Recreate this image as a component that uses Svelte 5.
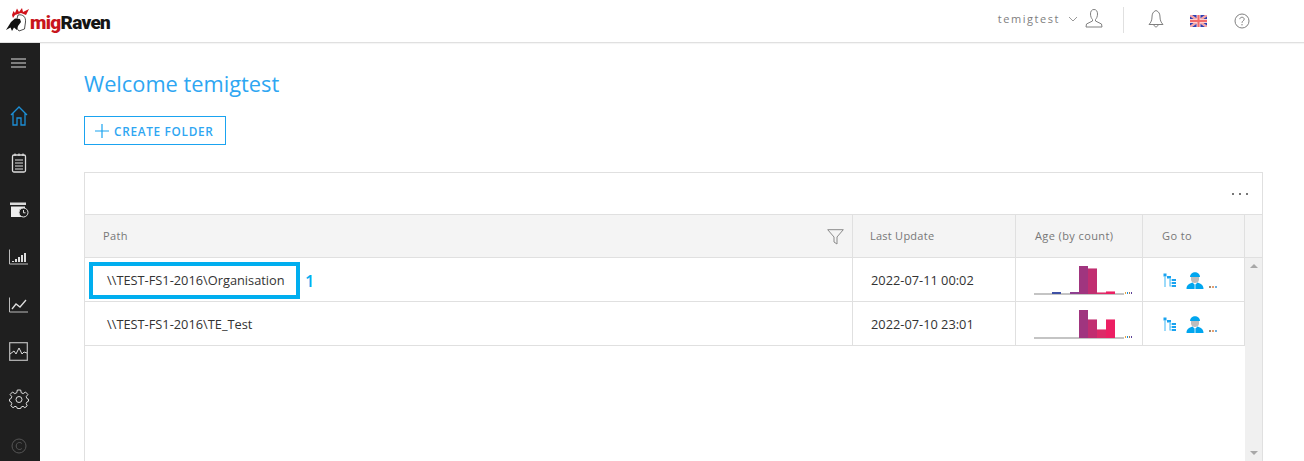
<script>
	// Sidebar entries, in order, are drawn in the markup below
	const rows = [
		{
			path: '\\\\TEST-FS1-2016\\Organisation',
			updated: '2022-07-11 00:02',
			age: [0, 0, 2, 0, 2, 28, 26, 2, 3]
		},
		{
			path: '\\\\TEST-FS1-2016\\TE_Test',
			updated: '2022-07-10 23:01',
			age: [0, 0, 0, 0, 0, 28, 19, 9, 19]
		}
	];

	const barColors = ['#5b3f96', '#5b3f96', '#3f51a5', '#6a3f96', '#8e3f8f', '#a0357f', '#c12e70', '#dc2b68', '#ec1f63'];
	const dotColors = ['#e8a33d', '#1f8fd6', '#a9794a', '#5b3f96'];
</script>

<div class="app">
	<header class="topbar">
		<div class="logo">
			<svg width="30" height="30" viewBox="0 0 30 30">
				<path d="M12 9 L13.5 5 L15 7 L17 2.5 L19 6 L22 2 L23 6 L29 3 L26 9 L21 7 L15 9 L13 12 Z" fill="#d0121b" />
				<path d="M18 9 C23 8 26 11 25.5 16 L24.5 23 L19 25 L15 20 Z" fill="#fff" stroke="#222" stroke-width="0.8" />
				<path d="M6 24 L11 16 L15 12.5 L20 13 L21 16 L18 20 L17 24 L14 21.5 L12 25 L10.5 21.5 Z" fill="#111" />
			</svg>
			<span class="logo-text"><span class="mig">mig</span>Raven</span>
		</div>
		<div class="top-actions">
			<span class="username">temigtest</span>
			<svg class="chevron" width="10" height="6" viewBox="0 0 10 6"><path d="M1 1 L5 5 L9 1" fill="none" stroke="#999" /></svg>
			<svg class="user" width="18" height="20" viewBox="0 0 18 20">
				<path d="M9 1.5 C6.5 1.5 5.5 3.5 5.5 6 C5.5 8.5 6.5 10.5 7.5 11.5 L7.5 13 L1.5 16 L1 19 L17 19 L16.5 16 L10.5 13 L10.5 11.5 C11.5 10.5 12.5 8.5 12.5 6 C12.5 3.5 11.5 1.5 9 1.5 Z" fill="none" stroke="#808080" />
			</svg>
			<span class="divider"></span>
			<svg class="bell" width="16" height="20" viewBox="0 0 16 20">
				<path d="M8 1.5 C5 2.5 4 5 4 8 C4 11 3 13.5 1 15.5 L15 15.5 C13 13.5 12 11 12 8 C12 5 11 2.5 8 1.5 Z M6 16 C6.5 18.5 9.5 18.5 10 16" fill="none" stroke="#808080" />
			</svg>
			<svg class="flag" width="17" height="12" viewBox="0 0 17 12">
				<rect width="17" height="12" fill="#2b3fb5" />
				<path d="M0 0 L17 12 M17 0 L0 12" stroke="#f7a6a6" stroke-width="2.4" />
				<path d="M8.5 0 V12 M0 6 H17" stroke="#fbd0d0" stroke-width="4" />
				<path d="M8.5 0 V12 M0 6 H17" stroke="#f26a6a" stroke-width="2" />
			</svg>
			<svg class="help" width="16" height="16" viewBox="0 0 16 16">
				<circle cx="8" cy="8" r="7" fill="none" stroke="#808080" />
				<path d="M5.8 6.2 C5.8 3.6 10.2 3.6 10.2 6.2 C10.2 7.8 8 7.8 8 9.8" fill="none" stroke="#808080" />
				<circle cx="8" cy="11.8" r="0.7" fill="#808080" />
			</svg>
		</div>
	</header>

	<div class="body">
		<nav class="sidebar">
			<div class="nav-item menu">
				<svg width="15" height="10" viewBox="0 0 15 10"><path d="M0 1 H15 M0 5 H15 M0 9 H15" stroke="#ddd" stroke-width="1.2" /></svg>
			</div>
			<div class="nav-item home">
				<svg width="18" height="20" viewBox="0 0 18 20"><path d="M1 9 L9 1 L17 9 M3 7.5 V19 H7 V12 H11 V19 H15 V7.5" fill="none" stroke="#1c8fd6" stroke-width="1.3" /></svg>
			</div>
			<div class="nav-item">
				<svg width="16" height="20" viewBox="0 0 16 20"><rect x="1.5" y="2" width="13" height="17" rx="1.5" fill="none" stroke="#ddd" stroke-width="1.3" /><path d="M4 7 H12 M4 10 H12 M4 13 H12 M4 16 H12 M4 0.5 V3 M8 0.5 V3 M12 0.5 V3" stroke="#ddd" stroke-width="1.2" /></svg>
			</div>
			<div class="nav-item">
				<svg width="20" height="16" viewBox="0 0 20 16"><rect x="1" y="0.5" width="16" height="2.5" fill="#ddd" /><rect x="2" y="4.5" width="14" height="10.5" fill="#eee" /><circle cx="14.5" cy="10.5" r="4.5" fill="#1f1f1f" stroke="#ddd" /><path d="M14.5 8 V10.8 H16.5" fill="none" stroke="#ddd" /></svg>
			</div>
			<div class="nav-item">
				<svg width="19" height="16" viewBox="0 0 19 16"><path d="M0.5 0.5 V15 H19" fill="none" stroke="#bbb" /><path d="M4 13 V12 M7 13 V10 M10 13 V8 M13 13 V6 M16 13 V4" stroke="#ddd" stroke-width="2" /></svg>
			</div>
			<div class="nav-item">
				<svg width="19" height="16" viewBox="0 0 19 16"><path d="M0.5 0.5 V15 H19" fill="none" stroke="#bbb" /><path d="M3 12 L7 7 L11 10 L17 3" fill="none" stroke="#ddd" stroke-width="1.3" /></svg>
			</div>
			<div class="nav-item">
				<svg width="19" height="19" viewBox="0 0 19 19"><rect x="0.7" y="0.7" width="17.6" height="17.6" fill="none" stroke="#bbb" stroke-width="1.2" /><path d="M1 12 L5 9 L7 12 L10 6 L13 12 L15 10 L18 11" fill="none" stroke="#ddd" /></svg>
			</div>
			<div class="nav-item">
				<svg width="20" height="20" viewBox="0 0 20 20"><path d="M8.3 1 H11.7 L12.2 3.7 L14.2 4.6 L16.5 3 L18.9 5.5 L17.2 7.7 L18.1 9.7 L19.5 10.2 V12.2 L17.9 13 L17.2 14.6 L18.2 16.8 L15.9 18.7 L14 17.3 L12.2 18 L11.7 19.5 H8.3 L7.8 18 L6 17.3 L4.1 18.7 L1.8 16.8 L2.8 14.6 L2.1 13 L0.5 12.2 V10.2 L1.9 9.7 L2.8 7.7 L1.1 5.5 L3.5 3 L5.8 4.6 L7.8 3.7 Z" fill="none" stroke="#ddd" /><circle cx="10" cy="10.5" r="3" fill="none" stroke="#ddd" /></svg>
			</div>
			<div class="nav-item">
				<svg width="16" height="16" viewBox="0 0 16 16"><circle cx="8" cy="8" r="7" fill="none" stroke="#555" /><path d="M10.8 5.5 C9 3.5 5.2 4.5 5.2 8 C5.2 11.5 9 12.5 10.8 10.5" fill="none" stroke="#555" /></svg>
			</div>
		</nav>

		<main class="content">
			<h1>Welcome temigtest</h1>
			<button class="create">
				<svg width="14" height="14" viewBox="0 0 14 14"><path d="M7 0 V14 M0 7 H14" stroke="#1aa3f0" stroke-width="1.2" /></svg>
				CREATE FOLDER
			</button>

			<section class="card">
				<div class="toolbar"><span class="more"><i></i><i></i><i></i></span></div>
				<div class="row head">
					<div class="cell path">
						Path
						<svg class="filter" width="17" height="16" viewBox="0 0 17 16"><path d="M0.7 0.7 H16.3 L10 8 V15 L7 13 V8 Z" fill="none" stroke="#8a8a8a" /></svg>
					</div>
					<div class="cell">Last Update</div>
					<div class="cell">Age (by count)</div>
					<div class="cell">Go to</div>
					<div class="cell gutter"></div>
				</div>
				<div class="table-body">
					<div class="rows">
						{#each rows as row, i}
							<div class="row item">
								<div class="cell path">
									{row.path}
									{#if i === 0}
										<span class="mark"></span>
										<span class="mark-no">1</span>
									{/if}
								</div>
								<div class="cell">{row.updated}</div>
								<div class="cell chart">
									<svg width="100" height="30" viewBox="0 0 100 30">
										<rect x="0" y="28.5" width="90" height="1" fill="#8a8a8a" />
										{#each row.age as h, b}
											{#if h > 0}
												<rect x={b * 9} y={29 - h} width="9" height={h} fill={barColors[b]} />
												{#if b > 5}<rect x={b * 9} y={29 - h} width="9" height="1" fill="#fff" opacity="0.45" />{/if}
											{/if}
										{/each}
										{#each dotColors as c, d}
											<rect x={91 + d * 2} y="27" width="1" height="2" fill={c} />
										{/each}
									</svg>
								</div>
								<div class="cell goto">
									<svg width="13" height="14" viewBox="0 0 13 14">
										<path d="M0.5 0.5 H3.5 V3.5 H0.5 Z M4 3 H8 V5.5 H4 Z M9 6 H13 V8 H9 Z M9 9 H13 V11 H9 Z M9 12 H13 V14 H9 Z" fill="#1aa3f0" />
										<path d="M2 3.5 V14 M7 5.5 V13 H9 M7 7 H9 M7 10 H9" fill="none" stroke="#5cc2f5" stroke-width="1.2" />
									</svg>
									<svg class="worker" width="18" height="18" viewBox="0 0 18 18">
										<path d="M5 6 H13 V8.5 C13 11 11 12 9 12 C7 12 5 11 5 8.5 Z" fill="#bdbdbd" />
										<path d="M4 6 C4 -0.5 14 -0.5 14 6 Z" fill="#00a6ef" />
										<path d="M0.5 18 C0.5 14 3 12.5 6.5 11.5 L9 14 L11.5 11.5 C15 12.5 17.5 14 17.5 18 Z" fill="#00a6ef" />
										<path d="M9 14 V18" stroke="#fff" stroke-width="0.8" />
									</svg>
									<span class="dots"><i></i><i></i><i></i></span>
								</div>
							</div>
						{/each}
					</div>
					<aside class="scrollbar">
						<span class="up"></span>
						<span class="down"></span>
					</aside>
				</div>
			</section>
		</main>
	</div>
</div>

<style>
	:global(body) {
		margin: 0;
		background: #fff;
		overflow: hidden;
	}

	.app {
		height: 461px;
		display: flex;
		flex-direction: column;
		overflow: hidden;
		font-family: 'Open Sans', 'Noto Sans', sans-serif;
		color: #333;
	}

	.topbar {
		height: 42px;
		flex: none;
		display: flex;
		align-items: center;
		justify-content: space-between;
		border-bottom: 1px solid #e0e0e0;
		box-shadow: 0 1px 1px rgba(0, 0, 0, 0.04);
	}

	.logo {
		display: flex;
		align-items: center;
	}

	.logo-text {
		font-family: 'Roboto', sans-serif;
		font-weight: 900;
		font-size: 19px;
		color: #151515;
		margin-top: 3px;
		letter-spacing: -0.7px;
	}

	.mig {
		color: #c8161d;
	}

	.top-actions {
		display: flex;
		align-items: center;
		margin-right: 54px;
	}

	.username {
		font-size: 11px;
		letter-spacing: 1.55px;
		color: #808080;
		margin-top: -6px;
	}

	.chevron {
		margin: -5px 0 0 8px;
	}

	.user {
		margin: -6px 0 0 7px;
	}

	.divider {
		width: 1px;
		height: 26px;
		background: #e0e0e0;
		margin: -2px 0 0 20px;
	}

	.bell {
		margin: -5px 0 0 24px;
	}

	.flag {
		margin: 0 0 0 26px;
	}

	.help {
		margin: 0 0 0 27px;
	}

	.body {
		flex: 1;
		display: flex;
		min-height: 0;
	}

	.sidebar {
		width: 40px;
		flex: none;
		background: #1f1f1f;
		display: flex;
		flex-direction: column;
	}

	.nav-item {
		height: 47.3px;
		flex: none;
		display: flex;
		align-items: center;
		justify-content: center;
		margin-left: -3px;
	}

	.nav-item.menu {
		height: 40px;
	}

	.nav-item.home {
		height: 46px;
		margin-top: 10px;
	}

	.content {
		flex: 1;
		min-width: 0;
		padding: 27px 41px 0 44px;
	}

	h1 {
		margin: 0;
		font-size: 21.8px;
		line-height: 28px;
		font-weight: 400;
		color: #2ea6f2;
	}

	.create {
		display: flex;
		align-items: center;
		gap: 5px;
		margin-top: 18px;
		height: 29px;
		width: 142px;
		padding: 0 0 0 10px;
		box-sizing: border-box;
		background: #fff;
		border: 1px solid #1aa3f0;
		color: #2ea6f2;
		font-family: inherit;
		font-size: 11.8px;
		font-weight: 600;
		letter-spacing: 0.7px;
		white-space: nowrap;
	}

	.card {
		margin-top: 27px;
		border: 1px solid #e0e0e0;
		border-bottom: none;
	}

	.toolbar {
		height: 41px;
		display: flex;
		justify-content: flex-end;
		align-items: center;
		padding-right: 14px;
	}

	.more {
		display: flex;
		gap: 5px;
	}

	.more i {
		width: 2px;
		height: 2px;
		background: #777;
	}

	.row {
		display: grid;
		grid-template-columns: 768px 163px 127px 102px 1fr;
	}

	.cell {
		display: flex;
		align-items: center;
		padding-left: 18px;
		border-right: 1px solid #e0e0e0;
		box-sizing: border-box;
		min-width: 0;
	}

	.head {
		height: 44px;
		padding-bottom: 2px;
		background: #f4f4f4;
		border-top: 1px solid #e0e0e0;
		border-bottom: 1px solid #e0e0e0;
		box-sizing: border-box;
		font-size: 11px;
		letter-spacing: 0.4px;
		color: #777;
	}

	.head .cell {
		margin-bottom: -2px;
		padding-bottom: 2px;
	}

	.head .cell:nth-child(2) {
		padding-left: 17px;
		letter-spacing: 0.25px;
	}

	.head .cell:nth-child(3),
	.head .cell:nth-child(4) {
		padding-left: 19px;
	}

	.head .path {
		position: relative;
	}

	.head .gutter {
		border-right: none;
	}

	.filter {
		position: absolute;
		right: 8px;
		top: 14px;
	}

	.table-body {
		display: flex;
		height: 203px;
	}

	.rows {
		width: 1160px;
		flex: none;
	}

	.item {
		grid-template-columns: 768px 163px 127px 102px;
		height: 44px;
		border-bottom: 1px solid #e0e0e0;
		box-sizing: border-box;
		font-size: 12.8px;
		color: #333;
	}

	.item .path {
		position: relative;
		padding-left: 22px;
		padding-top: 1px;
	}

	.item .cell:nth-child(2) {
		padding-left: 18px;
		padding-top: 1px;
	}

	.mark {
		position: absolute;
		left: 4px;
		top: 4px;
		width: 211px;
		height: 37px;
		box-sizing: border-box;
		border: 4px solid #00aeef;
	}

	.mark-no {
		position: absolute;
		left: 220px;
		top: 13px;
		font-size: 16.5px;
		font-weight: 600;
		line-height: 20px;
		color: #00aeef;
	}

	.chart svg {
		display: block;
	}

	.goto {
		padding-left: 20px;
		gap: 9px;
	}

	.goto > svg {
		flex: none;
		margin-top: 1px;
	}

	.goto .worker {
		margin-top: 0;
		margin-left: 1px;
	}

	.dots {
		display: flex;
		gap: 1px;
		margin: 15px 0 0 -4px;
	}

	.dots i {
		width: 2px;
		height: 2px;
		background: #a08a70;
	}

	.dots i:nth-child(2) {
		background: #e8a070;
	}

	.dots i:nth-child(3) {
		background: #6fb0e0;
	}

	.scrollbar {
		flex: 1;
		background: #f0f0f0;
		position: relative;
	}

	.up,
	.down {
		position: absolute;
		left: 5px;
		border-left: 4px solid transparent;
		border-right: 4px solid transparent;
	}

	.up {
		top: 6px;
		border-bottom: 4px solid #a8a8a8;
	}

	.down {
		bottom: 6px;
		border-top: 4px solid #a8a8a8;
	}
</style>
